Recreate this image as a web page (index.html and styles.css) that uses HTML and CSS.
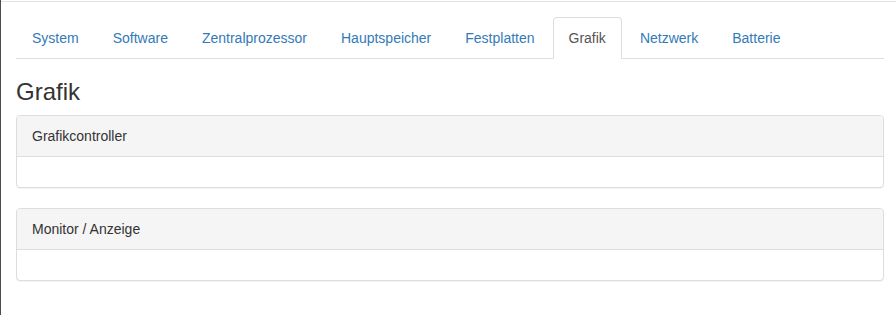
FILE: index.html
```html
<!DOCTYPE html>
<html>
<head>
    <title>Systeminformationen - Grafik</title>
    <link rel="stylesheet" href="styles.css">
</head>
<body>
    <div class="frame">
        <div class="content">
            <ul class="nav-tabs">
                <li><a href="#">System</a></li>
                <li><a href="#">Software</a></li>
                <li><a href="#">Zentralprozessor</a></li>
                <li><a href="#">Hauptspeicher</a></li>
                <li><a href="#">Festplatten</a></li>
                <li class="active"><a href="#">Grafik</a></li>
                <li><a href="#">Netzwerk</a></li>
                <li><a href="#">Batterie</a></li>
            </ul>

            <h3 class="section-title">Grafik</h3>

            <div class="panel">
                <div class="panel-heading">Grafikcontroller</div>
                <div class="panel-body"></div>
            </div>

            <div class="panel">
                <div class="panel-heading">Monitor / Anzeige</div>
                <div class="panel-body"></div>
            </div>
        </div>
    </div>
</body>
</html>
```

FILE: styles.css
```css
html, body {
    margin: 0;
    padding: 0;
    background: #fff;
}
body {
    font-family: "Liberation Sans", Arial, Helvetica, sans-serif;
    font-size: 14px;
    line-height: 20px;
    color: #333;
}
.frame {
    border-left: 1px solid #4d4d4d;
    min-height: 315px;
    box-sizing: border-box;
    padding-top: 1px;
}
.content {
    border-top: 1px solid #e3e3e3;
    padding: 15px 12px 0 15px;
}
.nav-tabs {
    display: flex;
    list-style: none;
    margin: 0;
    padding: 0;
    border-bottom: 1px solid #ddd;
}
.nav-tabs li {
    margin-right: 2px;
    margin-bottom: -1px;
}
.nav-tabs a {
    display: block;
    padding: 10px 15px;
    line-height: 20px;
    color: #337ab7;
    text-decoration: none;
    border: 1px solid transparent;
    border-radius: 4px 4px 0 0;
}
.nav-tabs li.active a {
    color: #555;
    background: #fff;
    border-color: #ddd #ddd transparent;
}
.section-title {
    font-size: 24px;
    font-weight: 500;
    line-height: 1.1;
    margin: 20px 0 10px;
}
.panel {
    border: 1px solid #ddd;
    border-radius: 4px;
    margin-bottom: 20px;
    box-shadow: 0 1px 1px rgba(0,0,0,0.05);
    background: #fff;
}
.panel-heading {
    padding: 10px 15px;
    background: #f5f5f5;
    border-bottom: 1px solid #ddd;
    border-radius: 3px 3px 0 0;
}
.panel-body {
    padding: 15px;
}
```
